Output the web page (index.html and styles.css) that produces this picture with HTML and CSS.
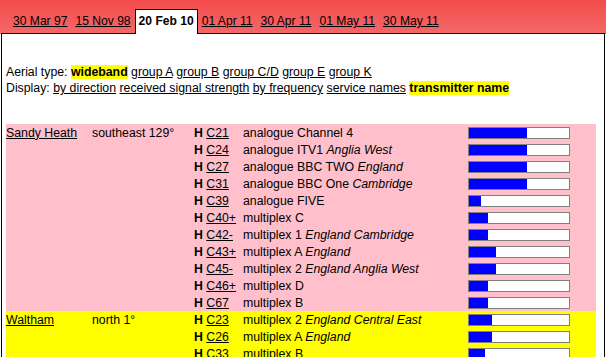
FILE: index.html
```html
<!DOCTYPE html>
<html lang="en">
  <head>
    <meta charset="UTF-8" />
    <title>Sandy Heath - transmitters</title>
    <link rel="stylesheet" href="styles.css">
  </head>
  <body>
    <div class="tabs">
      <a class="tab" href="#">30 Mar 97</a>
      <a class="tab" href="#">15 Nov 98</a>
      <span class="tab current">20 Feb 10</span>
      <a class="tab" href="#">01 Apr 11</a>
      <a class="tab" href="#">30 Apr 11</a>
      <a class="tab" href="#">01 May 11</a>
      <a class="tab" href="#">30 May 11</a>
    </div>

    <div class="panel">
      <div class="options">
        Aerial type: <b class="sel">wideband</b>
        <a href="#">group A</a> <a href="#">group B</a> <a href="#">group C/D</a>
        <a href="#">group E</a> <a href="#">group K</a><br>
        Display: <a href="#">by direction</a> <a href="#">received signal strength</a>
        <a href="#">by frequency</a> <a href="#">service names</a>
        <b class="sel">transmitter name</b>
      </div>

      <table class="tx">
        <colgroup>
          <col class="c-name">
          <col class="c-dir">
          <col class="c-ch">
          <col class="c-svc">
          <col class="c-bar">
        </colgroup>
        <tbody class="pink">
          <tr>
            <td><a href="#">Sandy Heath</a></td>
            <td>southeast 129°</td>
            <td><b>H</b> <a href="#">C21</a></td>
            <td>analogue Channel 4</td>
            <td><div class="bar"><div class="fill" style="width:58px"></div></div></td>
          </tr>
          <tr>
            <td></td><td></td>
            <td><b>H</b> <a href="#">C24</a></td>
            <td>analogue ITV1 <i>Anglia West</i></td>
            <td><div class="bar"><div class="fill" style="width:58px"></div></div></td>
          </tr>
          <tr>
            <td></td><td></td>
            <td><b>H</b> <a href="#">C27</a></td>
            <td>analogue BBC TWO <i>England</i></td>
            <td><div class="bar"><div class="fill" style="width:58px"></div></div></td>
          </tr>
          <tr>
            <td></td><td></td>
            <td><b>H</b> <a href="#">C31</a></td>
            <td>analogue BBC One <i>Cambridge</i></td>
            <td><div class="bar"><div class="fill" style="width:58px"></div></div></td>
          </tr>
          <tr>
            <td></td><td></td>
            <td><b>H</b> <a href="#">C39</a></td>
            <td>analogue FIVE</td>
            <td><div class="bar"><div class="fill" style="width:12px"></div></div></td>
          </tr>
          <tr>
            <td></td><td></td>
            <td><b>H</b> <a href="#">C40+</a></td>
            <td>multiplex C</td>
            <td><div class="bar"><div class="fill" style="width:19px"></div></div></td>
          </tr>
          <tr>
            <td></td><td></td>
            <td><b>H</b> <a href="#">C42-</a></td>
            <td>multiplex 1 <i>England Cambridge</i></td>
            <td><div class="bar"><div class="fill" style="width:19px"></div></div></td>
          </tr>
          <tr>
            <td></td><td></td>
            <td><b>H</b> <a href="#">C43+</a></td>
            <td>multiplex A <i>England</i></td>
            <td><div class="bar"><div class="fill" style="width:27px"></div></div></td>
          </tr>
          <tr>
            <td></td><td></td>
            <td><b>H</b> <a href="#">C45-</a></td>
            <td>multiplex 2 <i>England Anglia West</i></td>
            <td><div class="bar"><div class="fill" style="width:27px"></div></div></td>
          </tr>
          <tr>
            <td></td><td></td>
            <td><b>H</b> <a href="#">C46+</a></td>
            <td>multiplex D</td>
            <td><div class="bar"><div class="fill" style="width:19px"></div></div></td>
          </tr>
          <tr>
            <td></td><td></td>
            <td><b>H</b> <a href="#">C67</a></td>
            <td>multiplex B</td>
            <td><div class="bar"><div class="fill" style="width:19px"></div></div></td>
          </tr>
        </tbody>
        <tbody class="yellow">
          <tr>
            <td><a href="#">Waltham</a></td>
            <td>north 1°</td>
            <td><b>H</b> <a href="#">C23</a></td>
            <td>multiplex 2 <i>England Central East</i></td>
            <td><div class="bar"><div class="fill" style="width:23px"></div></div></td>
          </tr>
          <tr>
            <td></td><td></td>
            <td><b>H</b> <a href="#">C26</a></td>
            <td>multiplex A <i>England</i></td>
            <td><div class="bar"><div class="fill" style="width:23px"></div></div></td>
          </tr>
          <tr>
            <td></td><td></td>
            <td><b>H</b> <a href="#">C33</a></td>
            <td>multiplex B</td>
            <td><div class="bar"><div class="fill" style="width:16px"></div></div></td>
          </tr>
        </tbody>
      </table>
    </div>
  </body>
</html>
```

FILE: styles.css
```css
html {
  overflow: hidden;
}
body {
  margin: 0;
  font-family: "Liberation Sans", Arial, sans-serif;
  font-size: 12.1px;
  color: #000;
  background: linear-gradient(#f24b4b, #f46868 34px, #fff 34px);
}
a {
  color: #000;
}
.tabs {
  display: flex;
  align-items: flex-end;
  height: 34px;
  padding-left: 9px;
}
.tab {
  line-height: 15px;
  padding: 4px 4px 5px;
  border-top: 1px solid transparent;
}
.tab.current {
  position: relative;
  z-index: 1;
  padding: 4px 3px 5px;
  font-weight: bold;
  background: #fff;
  border: 1px solid #000;
  border-bottom: none;
}
.panel {
  margin: -1px 1px 0;
  padding: 30px 4px 0;
  border: 1px solid #000;
  background: #fff;
  height: 400px;
  font-size: 12.3px;
}
.options {
  line-height: 16px;
}
.sel {
  background: #ffff00;
}
.tx {
  margin-top: 28px;
  width: 590px;
  table-layout: fixed;
  border-collapse: collapse;
}
.c-name {
  width: 86px;
}
.c-dir {
  width: 102px;
}
.c-ch {
  width: 49px;
}
.c-svc {
  width: 225px;
}
.c-bar {
  width: 128px;
}
.tx td {
  height: 17px;
  padding: 0;
  white-space: nowrap;
  vertical-align: middle;
}
.pink {
  background: #ffc0cb;
}
.yellow {
  background: #ffff00;
}
.bar {
  width: 100px;
  height: 10px;
  border: 1px solid #808080;
  background: #fff;
}
.fill {
  height: 10px;
  background: #0000ff;
}
```
